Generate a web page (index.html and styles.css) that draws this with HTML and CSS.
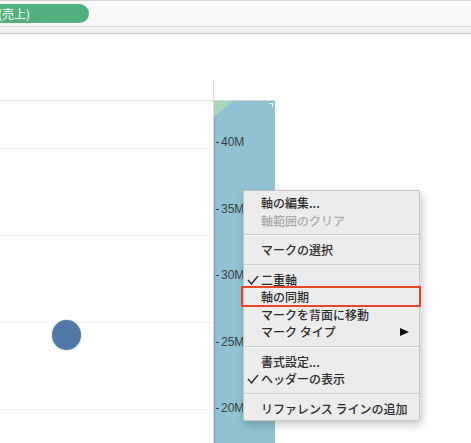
FILE: index.html
```html
<!DOCTYPE html>
<html lang="ja">
<head>
<meta charset="utf-8">
<title>Tableau 軸メニュー</title>
<link rel="stylesheet" href="styles.css">
</head>
<body>
<div class="toolbar">
  <div class="pill">合計(売上)</div>
</div>
<div class="strip"></div>
<div class="chart">
  <div class="vline"></div>
  <div class="pane">
    <div class="grid" style="top:47px"></div>
    <div class="grid" style="top:134px"></div>
    <div class="grid" style="top:221px"></div>
    <div class="grid" style="top:308px"></div>
    <div class="mark" style="left:52px;top:219px"></div>
  </div>
  <div class="axis">
    <div class="tri"></div>
    <div class="corner"></div>
    <div class="tick" style="top:34px">40M</div>
    <div class="tick" style="top:100.5px">35M</div>
    <div class="tick" style="top:167px">30M</div>
    <div class="tick" style="top:233.5px">25M</div>
    <div class="tick" style="top:300px">20M</div>
  </div>
  <div class="menu">
    <div class="item">軸の編集...</div>
    <div class="item disabled">軸範囲のクリア</div>
    <div class="sep"></div>
    <div class="item">マークの選択</div>
    <div class="sep"></div>
    <div class="item"><svg class="check" viewBox="0 0 12 10" width="12" height="10"><polyline points="1,5 4.5,9 11,1" fill="none" stroke="#2e2e2e" stroke-width="1.4"/></svg>二重軸</div>
    <div class="item"><span class="redbox"></span>軸の同期</div>
    <div class="item">マークを背面に移動</div>
    <div class="item">マーク タイプ<span class="arrow"></span></div>
    <div class="sep"></div>
    <div class="item">書式設定...</div>
    <div class="item"><svg class="check" viewBox="0 0 12 10" width="12" height="10"><polyline points="1,5 4.5,9 11,1" fill="none" stroke="#2e2e2e" stroke-width="1.4"/></svg>ヘッダーの表示</div>
    <div class="sep"></div>
    <div class="item">リファレンス ラインの追加</div>
  </div>
</div>
</body>
</html>
```
FILE: styles.css
```css
html, body {
  margin: 0;
  padding: 0;
  background: #ffffff;
  overflow: hidden;
}
body {
  width: 471px;
  height: 443px;
  font-family: "Noto Sans CJK JP", "Liberation Sans", sans-serif;
}
.toolbar {
  height: 25px;
  background: #f9f9f9;
  border-top: 1px solid #d4d4d4;
  border-bottom: 1px solid #dadada;
  position: relative;
}
.pill {
  margin-left: -34px;
  margin-top: 3px;
  width: 123px;
  height: 19px;
  box-sizing: border-box;
  padding-left: 8px;
  border-radius: 10px;
  background: #52b07f;
  color: #ffffff;
  font-size: 12px;
  line-height: 19px;
  white-space: nowrap;
}
.strip {
  height: 6px;
  background: #f3f3f3;
  border-bottom: 1px solid #c7c7c7;
}
.chart {
  position: relative;
  height: 409px;
  display: grid;
  grid-template-columns: 213px 1px 61px 1fr;
  grid-template-rows: 66px 1fr;
}
.vline {
  grid-column: 2;
  grid-row: 1 / 3;
  margin-top: 46px;
  background: #dedede;
}
.pane {
  grid-column: 1;
  grid-row: 2;
  position: relative;
  border-top: 1px solid #e4e4e4;
}
.grid {
  position: absolute;
  left: 0;
  right: 0;
  height: 1px;
  background: #f0f0f0;
}
.mark {
  position: absolute;
  width: 29px;
  height: 30px;
  border-radius: 50%;
  background: #4e78a6;
  box-shadow: 0 0 0 0.5px #c9d6e6;
}
.axis {
  grid-column: 3;
  grid-row: 2;
  position: relative;
  background: #8fc3d3;
  border-top: 1px solid #cfd9dc;
  box-shadow: inset 2px 0 2px -1px rgba(60, 110, 130, 0.35);
}
.tri {
  position: absolute;
  left: 0;
  top: 0;
  width: 19px;
  height: 16px;
  background: #a7d7b9;
  clip-path: polygon(0 0, 100% 0, 0 100%);
}
.corner {
  position: absolute;
  right: 2px;
  top: 2px;
  width: 3px;
  height: 3px;
  border-top: 1px solid #ffffff;
  border-right: 1px solid #ffffff;
}
.tick {
  position: absolute;
  left: 7px;
  height: 14px;
  line-height: 14px;
  font-family: "Liberation Sans", Arial, sans-serif;
  font-size: 12px;
  color: #363f42;
}
.tick::before {
  content: "";
  position: absolute;
  left: -5px;
  top: 7px;
  width: 3px;
  height: 1px;
  background: #363f42;
}
.menu {
  position: absolute;
  left: 243px;
  top: 156px;
  width: 177px;
  box-sizing: border-box;
  padding: 3px 0;
  background: #ececec;
  border: 1px solid #c6c6c6;
  border-radius: 2px;
  box-shadow: 2px 4px 10px rgba(0, 0, 0, 0.22);
}
.item {
  position: relative;
  height: 17.5px;
  line-height: 17.5px;
  padding-left: 17px;
  font-size: 12px;
  font-weight: 500;
  color: #2b2b2b;
  white-space: nowrap;
}
.item.disabled {
  color: #a9a9a9;
}
.sep {
  height: 12px;
  position: relative;
}
.sep::before {
  content: "";
  position: absolute;
  left: 0;
  right: 0;
  top: 5px;
  height: 1px;
  background: #d0d0d0;
  border-bottom: 1px solid #f6f6f6;
}
.check {
  position: absolute;
  left: 3px;
  top: 4px;
}
.redbox {
  position: absolute;
  left: -3px;
  right: -2px;
  top: -2px;
  bottom: -1.5px;
  border: 2px solid #e8452b;
}
.arrow {
  position: absolute;
  left: 156px;
  top: 5px;
  width: 0;
  height: 0;
  border-top: 4px solid transparent;
  border-bottom: 4px solid transparent;
  border-left: 9px solid #111111;
}
```
